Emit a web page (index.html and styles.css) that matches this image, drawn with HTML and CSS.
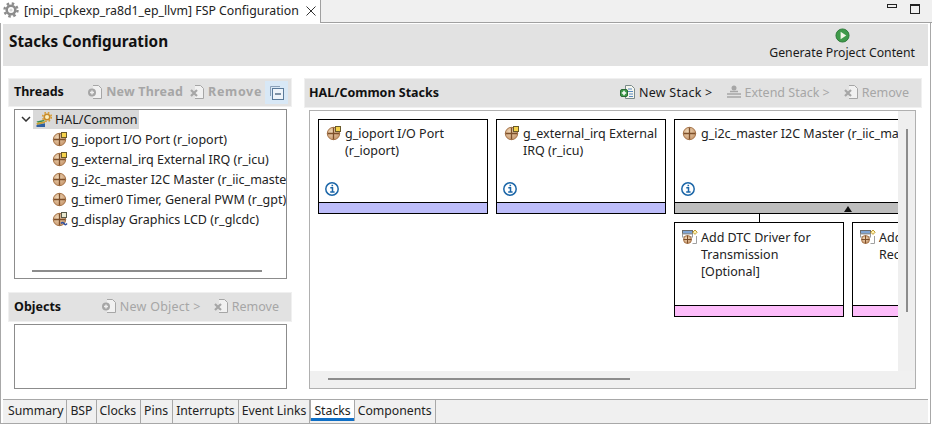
FILE: index.html
```html
<!DOCTYPE html>
<html lang="en">
<head>
<meta charset="utf-8">
<title>FSP Configuration</title>
<link rel="stylesheet" href="styles.css">
</head>
<body>
<svg class="defs" width="0" height="0">
  <defs>
    <radialGradient id="tan" cx=".4" cy=".35" r=".8">
      <stop offset="0" stop-color="#f0d8b8"/>
      <stop offset="1" stop-color="#c08c60"/>
    </radialGradient>
    <symbol id="comp" viewBox="0 0 16 16">
      <circle cx="7.500" cy="8.500" r="6.200" fill="url(#tan)" stroke="#a9774c"/>
      <path d="M7.500 2.500v12M1.500 8.500h12" stroke="#7d4f2a" stroke-width="1.300"/>
    </symbol>
    <symbol id="comp-y" viewBox="0 0 16 16">
      <use href="#comp"/>
      <rect x="9.500" y="1.500" width="5" height="5" fill="#f6d34c" stroke="#6a5a2a"/>
    </symbol>
    <symbol id="comp-d" viewBox="0 0 16 16">
      <use href="#comp"/>
      <rect x="9.500" y="1.500" width="5" height="5" fill="#e8e8d0" stroke="#5a5a4a"/>
      <path d="M9 12.500c1.200-1.500 2-1.500 3 0s1.800 1.500 3 0" fill="none" stroke="#3050a0" stroke-width="1.500"/>
    </symbol>
    <symbol id="info" viewBox="0 0 14 14">
      <circle cx="7" cy="7" r="6.200" fill="#fff" stroke="#1b66a8" stroke-width="1.500"/>
      <path d="M5.300 5.700h2.200v4M5.200 10h4.400M6.500 3.500h1.600" stroke="#1b66a8" stroke-width="1.500" fill="none"/>
    </symbol>
    <symbol id="add" viewBox="0 0 16 16">
      <rect x="0.500" y="1.500" width="10" height="3.500" fill="#7fa5d5" stroke="#6a6a6a"/>
      <rect x="0.500" y="5" width="10" height="3" fill="#fff" stroke="#9a9a9a"/>
      <circle cx="5.500" cy="10.500" r="4" fill="url(#tan)" stroke="#a9774c"/>
      <path d="M5.500 6.500v8M1.500 10.500h8" stroke="#7d4f2a"/>
      <path d="M13 1l2.200 2.200L13 5.400l-2.200-2.200z" fill="#fff3b0" stroke="#c09a30"/>
      <path d="M14.500 7v7.500h-4" fill="none" stroke="#a0a0a0"/>
    </symbol>
    <symbol id="doc-add" viewBox="0 0 16 16">
      <path d="M6 1.500h5.500l3 3v10H6" fill="#fff" fill-opacity=".5" stroke="currentColor"/>
      <circle cx="5" cy="8.500" r="4" fill="currentColor"/>
      <path d="M5 6.500v4M3 8.500h4" stroke="#eee" stroke-width="1.400"/>
    </symbol>
    <symbol id="doc-x" viewBox="0 0 16 16">
      <path d="M6 1.500h5.500l3 3v10H6" fill="#fff" fill-opacity=".5" stroke="currentColor"/>
      <path d="M2 6l6 6M8 6l-6 6" stroke="currentColor" stroke-width="2.200"/>
    </symbol>
    <symbol id="stack-new" viewBox="0 0 16 16">
      <path d="M5.500 1.500h6l3 3v10h-9z" fill="#f6f6ee" stroke="#7a8a8a"/>
      <path d="M8 5h4M8 7.500h5M9 10h4M9 12.500h4" stroke="#5a8ac0"/>
      <rect x="0.500" y="5.500" width="7" height="7" rx="1.500" fill="#3f9a4a" stroke="#2a6a34"/>
      <path d="M4 6.800v4.400M1.800 9h4.400" stroke="#fff" stroke-width="1.500"/>
    </symbol>
    <symbol id="gear" viewBox="0 0 16 16">
      <circle cx="8" cy="8" r="4.300" fill="none" stroke="#8c8c8c" stroke-width="2.600"/>
      <circle cx="8" cy="8" r="6.500" fill="none" stroke="#8c8c8c" stroke-width="2.400" stroke-dasharray="2.500 2.600"/>
      <circle cx="8" cy="8" r="1.600" fill="#d8d8d8"/>
    </symbol>
  </defs>
</svg>

<div class="editor">
  <div class="title-bar">
    <div class="editor-tab">
      <svg class="ic16"><use href="#gear"/></svg>
      <span class="tab-name">[mipi_cpkexp_ra8d1_ep_llvm] FSP Configuration</span>
      <svg class="close" viewBox="0 0 10 10"><path d="M0.500 0.500l9 9M9.500 0.500l-9 9" stroke="#333" fill="none"/></svg>
    </div>
    <div class="window-btns">
      <span class="btn-min"></span>
      <span class="btn-max"></span>
    </div>
  </div>

  <div class="page">
    <header class="page-head">
      <h1>Stacks Configuration</h1>
      <div class="generate">
        <svg class="gen-icon" viewBox="0 0 16 16">
          <circle cx="8" cy="8" r="7" fill="#3f9a4a" stroke="#2e7a3a"/>
          <path d="M6 4l6 4-6 4z" fill="#f2f7e6"/>
        </svg>
        <span>Generate Project Content</span>
      </div>
    </header>

    <main class="columns">
      <section class="left">
        <div class="bar threads-bar">
          <h2>Threads</h2>
          <div class="tools bold-tools">
            <span class="tool off t-newthread"><svg class="ic16"><use href="#doc-add"/></svg>New Thread</span>
            <span class="tool off t-remove"><svg class="ic16"><use href="#doc-x"/></svg>Remove</span>
            <span class="collapse">
              <svg class="ic16" viewBox="0 0 16 16">
                <path d="M1.500 11V1.500H11" fill="none" stroke="#8aa0b8"/>
                <rect x="3.500" y="3.500" width="11" height="11" fill="#eef4fa" stroke="#5a7a9a"/>
                <path d="M6 9h6" stroke="#33506e" stroke-width="1.200"/>
              </svg>
            </span>
          </div>
        </div>
        <div class="tree">
          <div class="tree-root">
            <svg class="chev" viewBox="0 0 10 6"><path d="M1 1l4 4 4-4" fill="none" stroke="#333" stroke-width="1.500"/></svg>
            <span class="root-sel">
              <svg class="ic16" viewBox="0 0 16 16">
                <path d="M0.500 9.500l7-1.500 1.500 1-7 1.800z" fill="#2f8a4a"/>
                <path d="M0.500 11l8.500-1.700v1.700L1 13z" fill="#c8a030"/>
                <path d="M0.500 13l8.500-1.800V15H0.500z" fill="#2f5fa0"/>
                <circle cx="11" cy="5" r="2.800" fill="#fbeec0" stroke="#c88a28" stroke-width="1.600"/>
                <circle cx="11" cy="5" r="4.400" fill="none" stroke="#d89a30" stroke-width="1.500" stroke-dasharray="1.700 1.800"/>
              </svg>
              <span>HAL/Common</span>
            </span>
          </div>
          <div class="tree-row"><svg class="ic16"><use href="#comp-y"/></svg><span>g_ioport I/O Port (r_ioport)</span></div>
          <div class="tree-row"><svg class="ic16"><use href="#comp-y"/></svg><span>g_external_irq External IRQ (r_icu)</span></div>
          <div class="tree-row"><svg class="ic16"><use href="#comp"/></svg><span>g_i2c_master I2C Master (r_iic_master)</span></div>
          <div class="tree-row"><svg class="ic16"><use href="#comp"/></svg><span>g_timer0 Timer, General PWM (r_gpt)</span></div>
          <div class="tree-row"><svg class="ic16"><use href="#comp-d"/></svg><span>g_display Graphics LCD (r_glcdc)</span></div>
          <div class="tree-scroll"><span class="tree-thumb"></span></div>
        </div>
        <div class="bar objects-bar">
          <h2>Objects</h2>
          <div class="tools">
            <span class="tool off t-newobj"><svg class="ic16"><use href="#doc-add"/></svg>New Object &gt;</span>
            <span class="tool off"><svg class="ic16"><use href="#doc-x"/></svg>Remove</span>
          </div>
        </div>
        <div class="objects-box"></div>
      </section>

      <section class="right">
        <div class="bar stacks-bar">
          <h2>HAL/Common Stacks</h2>
          <div class="tools">
            <span class="tool on"><svg class="ic16"><use href="#stack-new"/></svg>New Stack &gt;</span>
            <span class="tool off"><svg class="ic16" viewBox="0 0 16 16"><path d="M1 10h14M1 13h14M4 7.500h8" stroke="currentColor" stroke-width="1.300"/><circle cx="8" cy="4" r="2.500" fill="currentColor"/></svg>Extend Stack &gt;</span>
            <span class="tool off"><svg class="ic16"><use href="#doc-x"/></svg>Remove</span>
          </div>
        </div>
        <div class="stacks-box">
          <div class="stacks-top">
            <div class="canvas">
              <div class="stack">
                <div class="card">
                  <div class="card-body"><svg class="ic16"><use href="#comp-y"/></svg><p>g_ioport I/O Port (r_ioport)</p></div>
                  <svg class="info"><use href="#info"/></svg>
                  <div class="strip purple"></div>
                </div>
              </div>
              <div class="stack">
                <div class="card">
                  <div class="card-body"><svg class="ic16"><use href="#comp-y"/></svg><p>g_external_irq External IRQ (r_icu)</p></div>
                  <svg class="info"><use href="#info"/></svg>
                  <div class="strip purple"></div>
                </div>
              </div>
              <div class="stack wide">
                <div class="card">
                  <div class="card-body"><svg class="ic16"><use href="#comp"/></svg><p class="nowrap">g_i2c_master I2C Master (r_iic_master)</p></div>
                  <svg class="info"><use href="#info"/></svg>
                  <div class="strip grey"><span class="tri"></span></div>
                </div>
                <div class="links">
                  <div class="link"></div>
                  <div class="link"></div>
                </div>
                <div class="children">
                  <div class="card child">
                    <div class="card-body"><svg class="ic16"><use href="#add"/></svg><p>Add DTC Driver for Transmission [Optional]</p></div>
                    <div class="strip pink"></div>
                  </div>
                  <div class="card child">
                    <div class="card-body"><svg class="ic16"><use href="#add"/></svg><p>Add DTC Driver for Reception [Optional]</p></div>
                    <div class="strip pink"></div>
                  </div>
                </div>
              </div>
            </div>
            <div class="v-scroll"><span class="v-thumb"></span></div>
          </div>
          <div class="h-scroll"><span class="h-thumb"></span></div>
        </div>
      </section>
    </main>

    <nav class="tabs">
      <span class="tab">Summary</span>
      <span class="tab">BSP</span>
      <span class="tab">Clocks</span>
      <span class="tab">Pins</span>
      <span class="tab">Interrupts</span>
      <span class="tab">Event Links</span>
      <span class="tab active">Stacks</span>
      <span class="tab">Components</span>
    </nav>
  </div>
</div>
</body>
</html>
```
FILE: styles.css
```css
* { box-sizing: border-box; }
html, body { margin: 0; padding: 0; }
body {
  width: 932px;
  height: 425px;
  overflow: hidden;
  background: #fff;
  color: #1a1a1a;
  font: 12.5px/17px "Noto Sans", "Open Sans", sans-serif;
}
.defs { position: absolute; }
.ic16 { width: 16px; height: 16px; flex: none; display: block; }

.editor { height: 424px; display: flex; flex-direction: column; }

.title-bar {
  height: 23px;
  display: flex;
  justify-content: space-between;
  background: #f0f0f0;
  border-bottom: 1px solid #a0a0a0;
  flex: none;
}
.editor-tab {
  width: 321px;
  height: 23px;
  padding: 2px 4px 0 3px;
  display: flex;
  align-items: flex-start;
  background: #fff;
  border-right: 1px solid #a0a0a0;
}
.tab-name { margin-left: 5px; font-size: 12.3px; white-space: nowrap; color: #222; flex: 1; }
.close { width: 10px; height: 10px; margin-top: 4px; }
.window-btns { display: flex; gap: 13px; padding: 4px 0 0; margin-right: 12px; }
.btn-min { width: 10px; height: 4px; border: 1px solid #222; }
.btn-max { width: 10px; height: 10px; border: 1px solid #222; border-top-width: 2px; }

.page {
  flex: 1;
  min-height: 0;
  display: flex;
  flex-direction: column;
  border-left: 1px solid #a8a8a8;
  border-right: 1px solid #a8a8a8;
  border-bottom: 1px solid #a8a8a8;
  margin-right: 1px;
  padding: 1px 2px 0 2px;
}

.page-head {
  height: 42px;
  background: #e2e2e2;
  display: flex;
  justify-content: space-between;
  padding: 0 13px 0 6px;
  flex: none;
}
.page-head h1 { margin: 8px 0 0; font-size: 15.3px; line-height: 19px; font-weight: 700; color: #111; }
.generate { display: flex; flex-direction: column; align-items: center; margin-top: 4px; font-size: 12.25px; }
.gen-icon { width: 15px; height: 15px; display: block; margin-bottom: 1px; }

.columns { flex: 1; min-height: 0; display: flex; gap: 14px; padding: 13px 0 0 6px; }
.left { width: 282px; flex: none; display: flex; flex-direction: column; }
.right { width: 616px; flex: none; display: flex; flex-direction: column; }

.bar {
  display: flex;
  align-items: center;
  justify-content: space-between;
  background: #e2e2e2;
  box-shadow: 0 0 0 1px #f0f0f0;
  padding: 0 0 2px 5px;
  flex: none;
}
.bar h2 { margin: 0; font-size: 12.5px; font-weight: 700; color: #111; }
.threads-bar { height: 27px; }
.objects-bar { height: 28px; margin-top: 14px; }
.stacks-bar { height: 28px; padding-left: 4px; }
.tools { display: flex; align-items: center; }
.tool { display: flex; align-items: center; gap: 3px; white-space: nowrap; }
.tool.off { color: #a6a6a6; }
.tool.on { color: #1a1a1a; letter-spacing: .25px; }
.bold-tools .tool { font-weight: 700; letter-spacing: .2px; }
.t-newthread { margin-right: 6px; }
.t-remove { margin-right: 3px; letter-spacing: .65px; }
.bold-tools .t-remove { letter-spacing: .65px; }
.t-newobj { letter-spacing: .25px; }
.collapse {
  width: 23px; height: 23px;
  margin: 0 3px -2px 0;
  background: #d8e8f6;
  display: flex; align-items: center; justify-content: center;
}

.stacks-bar .tools { gap: 13px; padding-right: 12px; }
.objects-bar .tools { padding-right: 12px; gap: 12px; }

.tree {
  height: 170px;
  margin: 3px 4px 0 5px;
  background: #fff;
  border: 1px solid #8c8c8c;
  overflow: hidden;
  display: flex;
  flex-direction: column;
  flex: none;
}
.tree-root { height: 20px; display: flex; align-items: flex-start; padding-left: 6px; flex: none; }
.chev { width: 10px; height: 6px; margin: 6px 2px 0 0; flex: none; }
.root-sel { display: flex; align-items: center; gap: 3px; background: #d9d9d9; height: 19px; padding: 0 1px 0 3px; }
.tree-row { height: 20px; display: flex; align-items: center; gap: 3px; padding: 0 0 2px 37px; white-space: nowrap; flex: none; color: #222; }
.tree-scroll { margin-top: 40px; padding-left: 17px; }
.tree-thumb { display: block; width: 230px; height: 2px; background: #8c8c8c; }

.objects-box {
  height: 65px;
  margin: 3px 4px 0 5px;
  background: #fff;
  border: 1px solid #8c8c8c;
  flex: none;
}

.stacks-box {
  margin: 3px 5px 0 4px;
  height: 279px;
  border: 1px solid #b0b0b0;
  background: #f0f0f0;
  display: flex;
  flex-direction: column;
}
.stacks-top { height: 260px; display: flex; flex: none; }
.canvas {
  width: 588px;
  background: #fff;
  overflow: hidden;
  display: flex;
  gap: 8px;
  padding: 8px 0 0 8px;
  flex: none;
}
.stack { width: 170px; flex: none; }
.stack.wide { width: 348px; }
.card {
  width: 100%;
  height: 95px;
  border: 1px solid #000;
  background: #fff;
  display: flex;
  flex-direction: column;
}
.card-body { display: flex; gap: 3px; padding: 5px 7px 0 7px; height: 56px; flex: none; overflow: hidden; color: #222; }
.card-body p { margin: 0; }
.card-body .nowrap { white-space: nowrap; }
.info { width: 14px; height: 14px; margin: 6px 0 0 6px; flex: none; display: block; }
.strip { height: 11px; margin-top: auto; border-top: 1px solid #000; flex: none; display: flex; justify-content: center; }
.purple { background: #bdbdfa; }
.pink { background: #fdbdfa; }
.grey { background: #bdbdbd; }
.tri { width: 0; height: 0; margin-top: 3px; border: 4px solid transparent; border-top: 0; border-bottom: 6px solid #111; }
.links { display: flex; gap: 8px; height: 8px; }
.link { width: 170px; }
.link:first-child { background: linear-gradient(#000, #000) 85px 0 / 1px 100% no-repeat; }
.children { display: flex; gap: 8px; }
.child { width: 170px; flex: none; }
.child .card-body { height: 82px; padding-top: 6px; }

.v-scroll { flex: 1; position: relative; background: #efefef; }
.v-thumb { position: absolute; left: 8px; top: 18px; width: 2px; height: 183px; background: #8c8c8c; }
.h-scroll { flex: 1; position: relative; }
.h-thumb { position: absolute; left: 18px; top: 7px; width: 302px; height: 2px; background: #8c8c8c; }

.tabs {
  margin: auto 0 0;
  height: 24px;
  background: #f0f0f0;
  border-top: 1px solid #a8a8a8;
  display: flex;
  padding-left: 2px;
  flex: none;
  font-size: 12.25px;
}
.tab {
  padding: 2px 3px 0 3px;
  border-right: 1px solid #a8a8a8;
  white-space: nowrap;
  color: #222;
}
.tab:nth-child(3), .tab:nth-child(4) { padding-right: 4px; }
.tab.active { background: #fff; border-left: 1px solid #a8a8a8; box-shadow: inset 0 -3px 0 #0f6fc6; height: 21px; }
```
